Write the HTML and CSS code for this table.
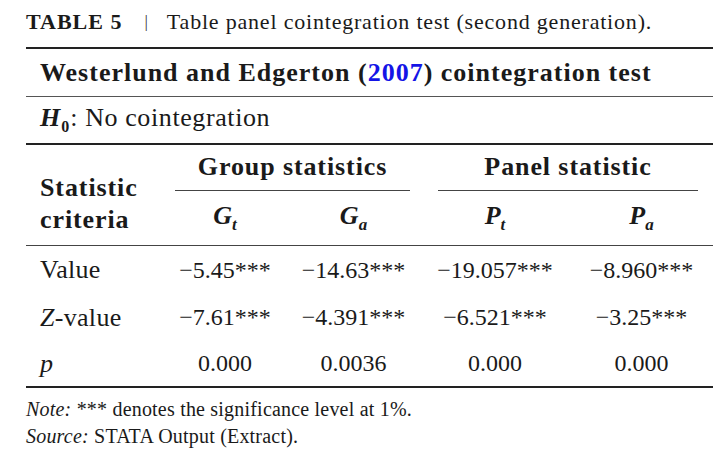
FILE: index.html
```html
<!DOCTYPE html>
<html>
<head>
<meta charset="utf-8">
<link rel="stylesheet" href="styles.css">
</head>
<body>
<div class="page">
  <div class="caption"><span class="label">TABLE 5</span><span class="sep">|</span><span class="ctext">Table panel cointegration test (second generation).</span></div>
  <table class="tbl">
    <colgroup>
      <col class="c1"><col class="c2"><col class="c3"><col class="c4"><col class="c5">
    </colgroup>
    <thead>
      <tr class="title-row"><th colspan="5" class="title">Westerlund and Edgerton (<span class="link">2007</span>) cointegration test</th></tr>
      <tr class="h0-row"><td colspan="5" class="h0"><b class="hyp"><i>H</i><sub>0</sub></b>: No cointegration</td></tr>
      <tr class="grp-row">
        <th rowspan="2" class="crit">Statistic<br>criteria</th>
        <th colspan="2" class="grp"><div class="grp-in g1">Group statistics</div></th>
        <th colspan="2" class="grp"><div class="grp-in g2">Panel statistic</div></th>
      </tr>
      <tr class="sym-row">
        <th class="sym"><i>G</i><sub><i>t</i></sub></th>
        <th class="sym"><i>G</i><sub><i>a</i></sub></th>
        <th class="sym"><i>P</i><sub><i>t</i></sub></th>
        <th class="sym"><i>P</i><sub><i>a</i></sub></th>
      </tr>
    </thead>
    <tbody>
      <tr><td class="lbl">Value</td><td>−5.45***</td><td>−14.63***</td><td>−19.057***</td><td>−8.960***</td></tr>
      <tr><td class="lbl"><i>Z</i>-value</td><td>−7.61***</td><td>−4.391***</td><td>−6.521***</td><td>−3.25***</td></tr>
      <tr class="last"><td class="lbl"><i>p</i></td><td>0.000</td><td>0.0036</td><td>0.000</td><td>0.000</td></tr>
    </tbody>
  </table>
  <div class="notes">
    <div><i>Note:</i> *** denotes the significance level at 1%.</div>
    <div><i>Source:</i> STATA Output (Extract).</div>
  </div>
</div>
</body>
</html>
```
FILE: styles.css
```css
html, body {
  margin: 0;
  padding: 0;
  background: #ffffff;
}
body {
  font-family: "Liberation Serif", "Times New Roman", serif;
  color: #1a1a1a;
}
.page {
  padding: 4px 7px 0 26px;
  width: 687px;
}
.caption {
  font-size: 22px;
  height: 36px;
  line-height: 28px;
  display: flex;
  align-items: center;
}
.label {
  font-weight: bold;
  letter-spacing: 1px;
}
.ctext {
  letter-spacing: 0.8px;
}
.sep {
  margin: 0 19px 0 22px;
  font-size: 17px;
  color: #333;
}
.tbl {
  width: 687px;
  border-collapse: collapse;
  table-layout: fixed;
  font-size: 24px;
  margin-top: 7px;
}
.c1 { width: 137px; }
.c2 { width: 124px; }
.c3 { width: 133px; }
.c4 { width: 150px; }
.c5 { width: 143px; }
.title-row th {
  border-top: 2px solid #222;
  border-bottom: 1px solid #555;
  height: 47px;
  padding: 0 0 0 14px;
  text-align: left;
  font-weight: bold;
  font-size: 26px;
  letter-spacing: 1px;
}
.link { color: #1414e6; }
.h0 {
  height: 46px;
  padding: 0 0 0 14px;
  border-bottom: 2px solid #222;
  font-size: 26px;
  letter-spacing: 0.6px;
}
.hyp { letter-spacing: 1px; }
.h0 sub { font-size: 16px; }
.crit {
  text-align: left;
  vertical-align: bottom;
  padding: 0 0 9px 14px;
  font-weight: bold;
  font-size: 26px;
  letter-spacing: 0.9px;
  line-height: 32px;
  border-bottom: 1px solid #444;
}
.grp {
  height: 46px;
  padding: 0;
  vertical-align: bottom;
  font-weight: bold;
  font-size: 26px;
  letter-spacing: 0.9px;
}
.grp-in {
  border-bottom: 1px solid #444;
  padding-bottom: 9px;
  line-height: 28px;
}
.g1 { margin: 0 10px 0 12px; }
.g2 { margin: 0 15px 0 18px; }
.sym {
  height: 54px;
  border-bottom: 1px solid #444;
  font-weight: bold;
  font-size: 26px;
  padding: 0;
}
.sym sub { font-size: 17px; }
tbody td {
  height: 47px;
  text-align: center;
  padding: 0;
  white-space: nowrap;
}
tbody td.lbl {
  text-align: left;
  padding-left: 14px;
  font-size: 26px;
  letter-spacing: 0.3px;
}
tbody tr:first-child td { height: 48px; }
tr.last td {
  border-bottom: 2px solid #222;
  height: 45px;
}
.notes {
  font-size: 20px;
  line-height: 27px;
  padding-top: 8px;
  letter-spacing: 0.2px;
}
```
